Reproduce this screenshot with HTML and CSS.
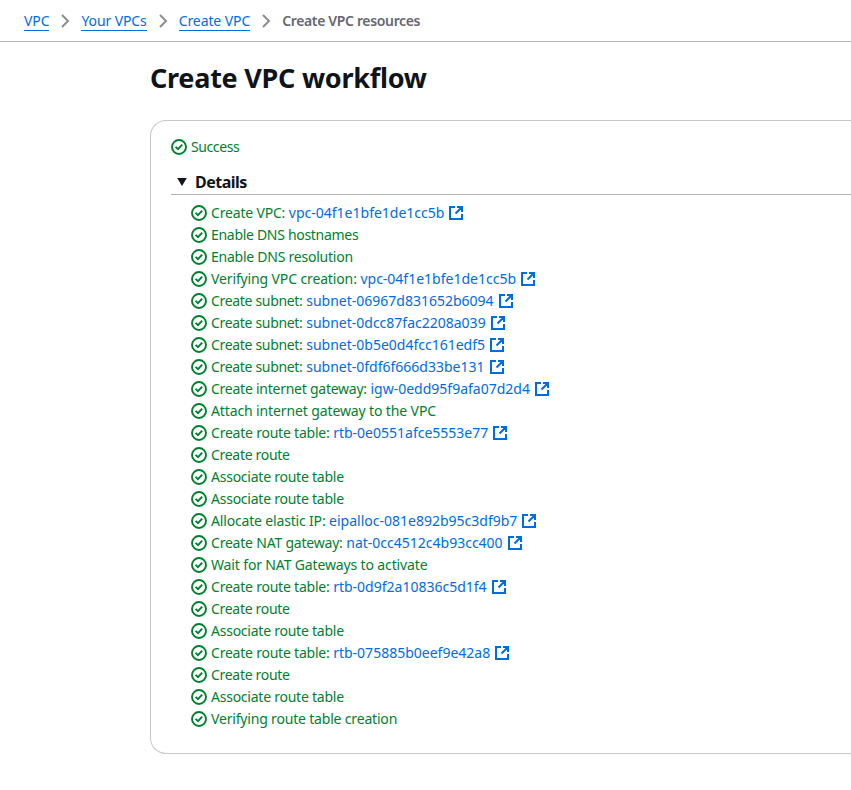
FILE: index.html
```html
<!DOCTYPE html>
<html lang="en">
<head>
<meta charset="utf-8">
<title>Create VPC resources</title>
<link rel="stylesheet" href="styles.css">
</head>
<body>
<svg width="0" height="0" class="defs">
  <symbol id="ok" viewBox="0 0 16 16"><circle cx="8" cy="8" r="7"/><path d="m4.6 7.8 2.4 2.4 4.2-4.6"/></symbol>
  <symbol id="ext" viewBox="0 0 16 16"><path d="M9 2h5v5M7.5 8.5 14 2M14 9v5H2V2h5"/></symbol>
  <symbol id="chev" viewBox="0 0 16 16"><path d="m5 2 6 6-6 6"/></symbol>
</svg>
<nav class="crumbs">
  <a>VPC</a><svg><use href="#chev"/></svg><a>Your VPCs</a><svg><use href="#chev"/></svg><a>Create VPC</a><svg><use href="#chev"/></svg><b>Create VPC resources</b>
</nav>
<main>
  <h1>Create VPC workflow</h1>
  <section class="card">
    <div class="status"><svg class="ok"><use href="#ok"/></svg><span>Success</span></div>
    <h2><svg class="caret" viewBox="0 0 12 10"><path d="M0 0h12L6 10z"/></svg><span>Details</span></h2>
    <ul id="steps"></ul>
  </section>
</main>
<script src="steps.js"></script>
</body>
</html>
```
FILE: steps.js
```js
// Each step: label, label tracking in px, optional resource id.
const steps = [
  ['Create VPC:', -0.18, 'vpc-04f1e1bfe1de1cc5b'],
  ['Enable DNS hostnames', -0.3],
  ['Enable DNS resolution', -0.24],
  ['Verifying VPC creation:', -0.13, 'vpc-04f1e1bfe1de1cc5b'],
  ['Create subnet:', -0.32, 'subnet-06967d831652b6094'],
  ['Create subnet:', -0.32, 'subnet-0dcc87fac2208a039'],
  ['Create subnet:', -0.32, 'subnet-0b5e0d4fcc161edf5'],
  ['Create subnet:', -0.32, 'subnet-0fdf6f666d33be131'],
  ['Create internet gateway:', -0.25, 'igw-0edd95f9afa07d2d4'],
  ['Attach internet gateway to the VPC', -0.12],
  ['Create route table:', -0.22, 'rtb-0e0551afce5553e77'],
  ['Create route', -0.3],
  ['Associate route table', -0.24],
  ['Associate route table', -0.24],
  ['Allocate elastic IP:', -0.17, 'eipalloc-081e892b95c3df9b7'],
  ['Create NAT gateway:', -0.21, 'nat-0cc4512c4b93cc400'],
  ['Wait for NAT Gateways to activate', -0.14],
  ['Create route table:', -0.22, 'rtb-0d9f2a10836c5d1f4'],
  ['Create route', -0.3],
  ['Associate route table', -0.24],
  ['Create route table:', -0.22, 'rtb-075885b0eef9e42a8'],
  ['Create route', -0.3],
  ['Associate route table', -0.24],
  ['Verifying route table creation', -0.18]
];
document.getElementById('steps').innerHTML = steps.map(([label, tracking, link]) =>
  `<li><svg class="ok"><use href="#ok"/></svg><span><span style="letter-spacing:${tracking}px">${label}</span>${link ? ` <a>${link}</a>` : ''}</span>${link ? '<svg class="ext"><use href="#ext"/></svg>' : ''}</li>`
).join('');
```
FILE: styles.css
```css
* { box-sizing: border-box; }
body {
  margin: 0;
  background: #fff;
  color: #0f141a;
  font: 14px/22px "Noto Sans", "Open Sans", sans-serif;
  overflow: hidden;
}
svg { fill: none; stroke: currentColor; stroke-width: 2; width: 16px; height: 16px; flex: none; }
.defs { position: absolute; width: 0; height: 0; }
.crumbs {
  display: flex;
  align-items: center;
  height: 42px;
  padding-left: 24px;
  border-bottom: 1px solid #b4b4bb;
  white-space: nowrap;
}
.crumbs a { color: #006ce0; line-height: 18px; margin-top: 2px; border-bottom: 1px solid #006ce0; letter-spacing: -0.1px; }
.crumbs svg { margin: 0 8px; color: #8c8c94; }
.crumbs b { color: #656871; font-weight: 600; letter-spacing: -0.35px; }
main { padding-left: 150px; overflow: hidden; }
h1 { margin: 18px 0 24px; font-size: 27px; line-height: 36px; font-weight: 700; letter-spacing: -0.25px; }
.card {
  height: 634px;
  padding: 15px 0 0 20px;
  border: 1px solid #c6c6cd;
  border-right: 0;
  border-radius: 16px 0 0 16px;
}
.status, li { display: flex; align-items: center; height: 22px; color: #00802f; white-space: nowrap; }
.status { letter-spacing: -0.4px; }
.ok { margin-right: 4px; stroke-width: 1.9; }
h2 {
  display: flex;
  align-items: center;
  height: 25px;
  margin: 12px 0 7px;
  padding-left: 6px;
  border-bottom: 1px solid #b4b4bb;
  font-size: 16px;
  font-weight: 700;
  letter-spacing: -0.5px;
}
.caret { width: 10px; height: 8px; margin-right: 8px; fill: currentColor; stroke: none; }
ul { list-style: none; margin: 0; padding: 0 0 0 20px; }
li a { color: #006ce0; }
.ext { margin-left: 4px; color: #006ce0; }
```
